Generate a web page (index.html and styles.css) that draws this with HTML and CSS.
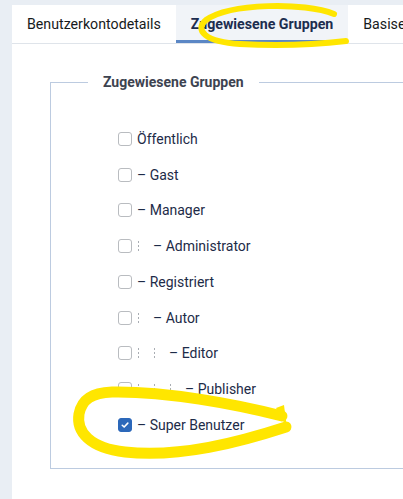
FILE: index.html
```html
<!DOCTYPE html>
<html lang="de">
<head>
<meta charset="utf-8">
<link rel="stylesheet" href="styles.css">
</head>
<body>
<div class="panel">
  <div class="tabs">
    <div class="tab">Benutzerkontodetails</div>
    <div class="tab active">Zugewiesene Gruppen</div>
    <div class="tab">Basiseinstellungen</div>
  </div>
  <div class="content">
    <fieldset class="groups">
      <legend>Zugewiesene Gruppen</legend>
      <div class="list">
        <label class="row"><span class="cb"></span><span class="txt">Öffentlich</span></label>
        <label class="row"><span class="cb"></span><span class="txt">– Gast</span></label>
        <label class="row"><span class="cb"></span><span class="txt">– Manager</span></label>
        <label class="row"><span class="cb"></span><span class="dots"></span><span class="txt">– Administrator</span></label>
        <label class="row"><span class="cb"></span><span class="txt">– Registriert</span></label>
        <label class="row"><span class="cb"></span><span class="dots"></span><span class="txt">– Autor</span></label>
        <label class="row"><span class="cb"></span><span class="dots"></span><span class="dots"></span><span class="txt">– Editor</span></label>
        <label class="row"><span class="cb"></span><span class="dots"></span><span class="dots"></span><span class="dots"></span><span class="txt">– Publisher</span></label>
        <label class="row"><span class="cb checked"><svg viewBox="0 0 14 14" width="14" height="14"><path d="M3.8 7.3 L6 9.4 L10.3 4.8" fill="none" stroke="#fff" stroke-width="1.8" stroke-linecap="round" stroke-linejoin="round"/></svg></span><span class="txt">– Super Benutzer</span></label>
      </div>
    </fieldset>
  </div>
</div>
<svg class="marks" width="403" height="499" viewBox="0 0 403 499">
  <path d="M334 14 C 305 2, 230 3, 206 20 C 194 30, 205 42, 240 44 C 280 46, 320 44, 346 41" fill="none" stroke="#ffe600" stroke-width="6" stroke-linecap="round"/>
  <path d="M286 427 C 240 442, 180 458, 125 452 C 90 448, 76 432, 79 414 C 82 399, 92 393, 112 392 C 165 391, 235 404, 282 416" fill="none" stroke="#ffe600" stroke-width="11" stroke-linecap="round"/>
  <path d="M276 408 L 284 405 L 287 428 Z" fill="#ffe600"/>
</svg>
</body>
</html>
```

FILE: styles.css
```css
html, body {
  margin: 0;
  padding: 0;
  height: 100%;
  overflow: hidden;
}
body {
  background: #e9eef4;
  font-family: Roboto, "Liberation Sans", sans-serif;
  position: relative;
}
.panel {
  margin: 5px 0 0 12px;
  background: #fff;
  height: calc(100% - 5px);
  overflow: hidden;
}
.tabs {
  display: flex;
  height: 38px;
  border-bottom: 1px solid #dfe4ea;
  white-space: nowrap;
  overflow: hidden;
}
.tab {
  flex: none;
  padding: 0 15px;
  display: flex;
  align-items: center;
  font-size: 14.2px;
  color: #161a20;
  box-sizing: border-box;
}
.tab.active {
  background: #f1f4f8;
  color: #1c2d4f;
  font-weight: 700;
  border-bottom: 3px solid #5b87c5;
  padding-top: 3px;
}
.content {
  padding: 28px 0 0 38px;
}
.groups {
  margin: 0;
  border: 1px solid #bccbe0;
  border-right: none;
  width: 400px;
  padding: 29px 0 25px 0;
  box-sizing: border-box;
}
.groups legend {
  margin-left: 37px;
  padding: 0 15px;
  font-size: 14px;
  line-height: 20px;
  font-weight: 700;
  color: #3d4350;
}
.list {
  display: flex;
  flex-direction: column;
  padding-left: 67px;
}
.row {
  height: 35.75px;
  display: flex;
  align-items: center;
  font-size: 14px;
  color: #1d2b48;
}
.cb {
  width: 14px;
  height: 14px;
  border: 1px solid #b9bcc0;
  border-radius: 3px;
  box-sizing: border-box;
  margin-right: 5px;
  flex: none;
  display: flex;
  align-items: center;
  justify-content: center;
}
.cb.checked {
  background: #2c68ba;
  border-color: #2c68ba;
}
.cb.checked svg {
  width: 12px;
  height: 12px;
}
.dots {
  width: 16px;
  height: 12px;
  flex: none;
  background-image: radial-gradient(circle, #a9adb3 0.9px, transparent 1.1px);
  background-size: 3px 4px;
  background-repeat: repeat-y;
  background-position: 0 0;
}
.txt {
  white-space: nowrap;
}
.marks {
  position: absolute;
  left: 0;
  top: 0;
  pointer-events: none;
}
```
